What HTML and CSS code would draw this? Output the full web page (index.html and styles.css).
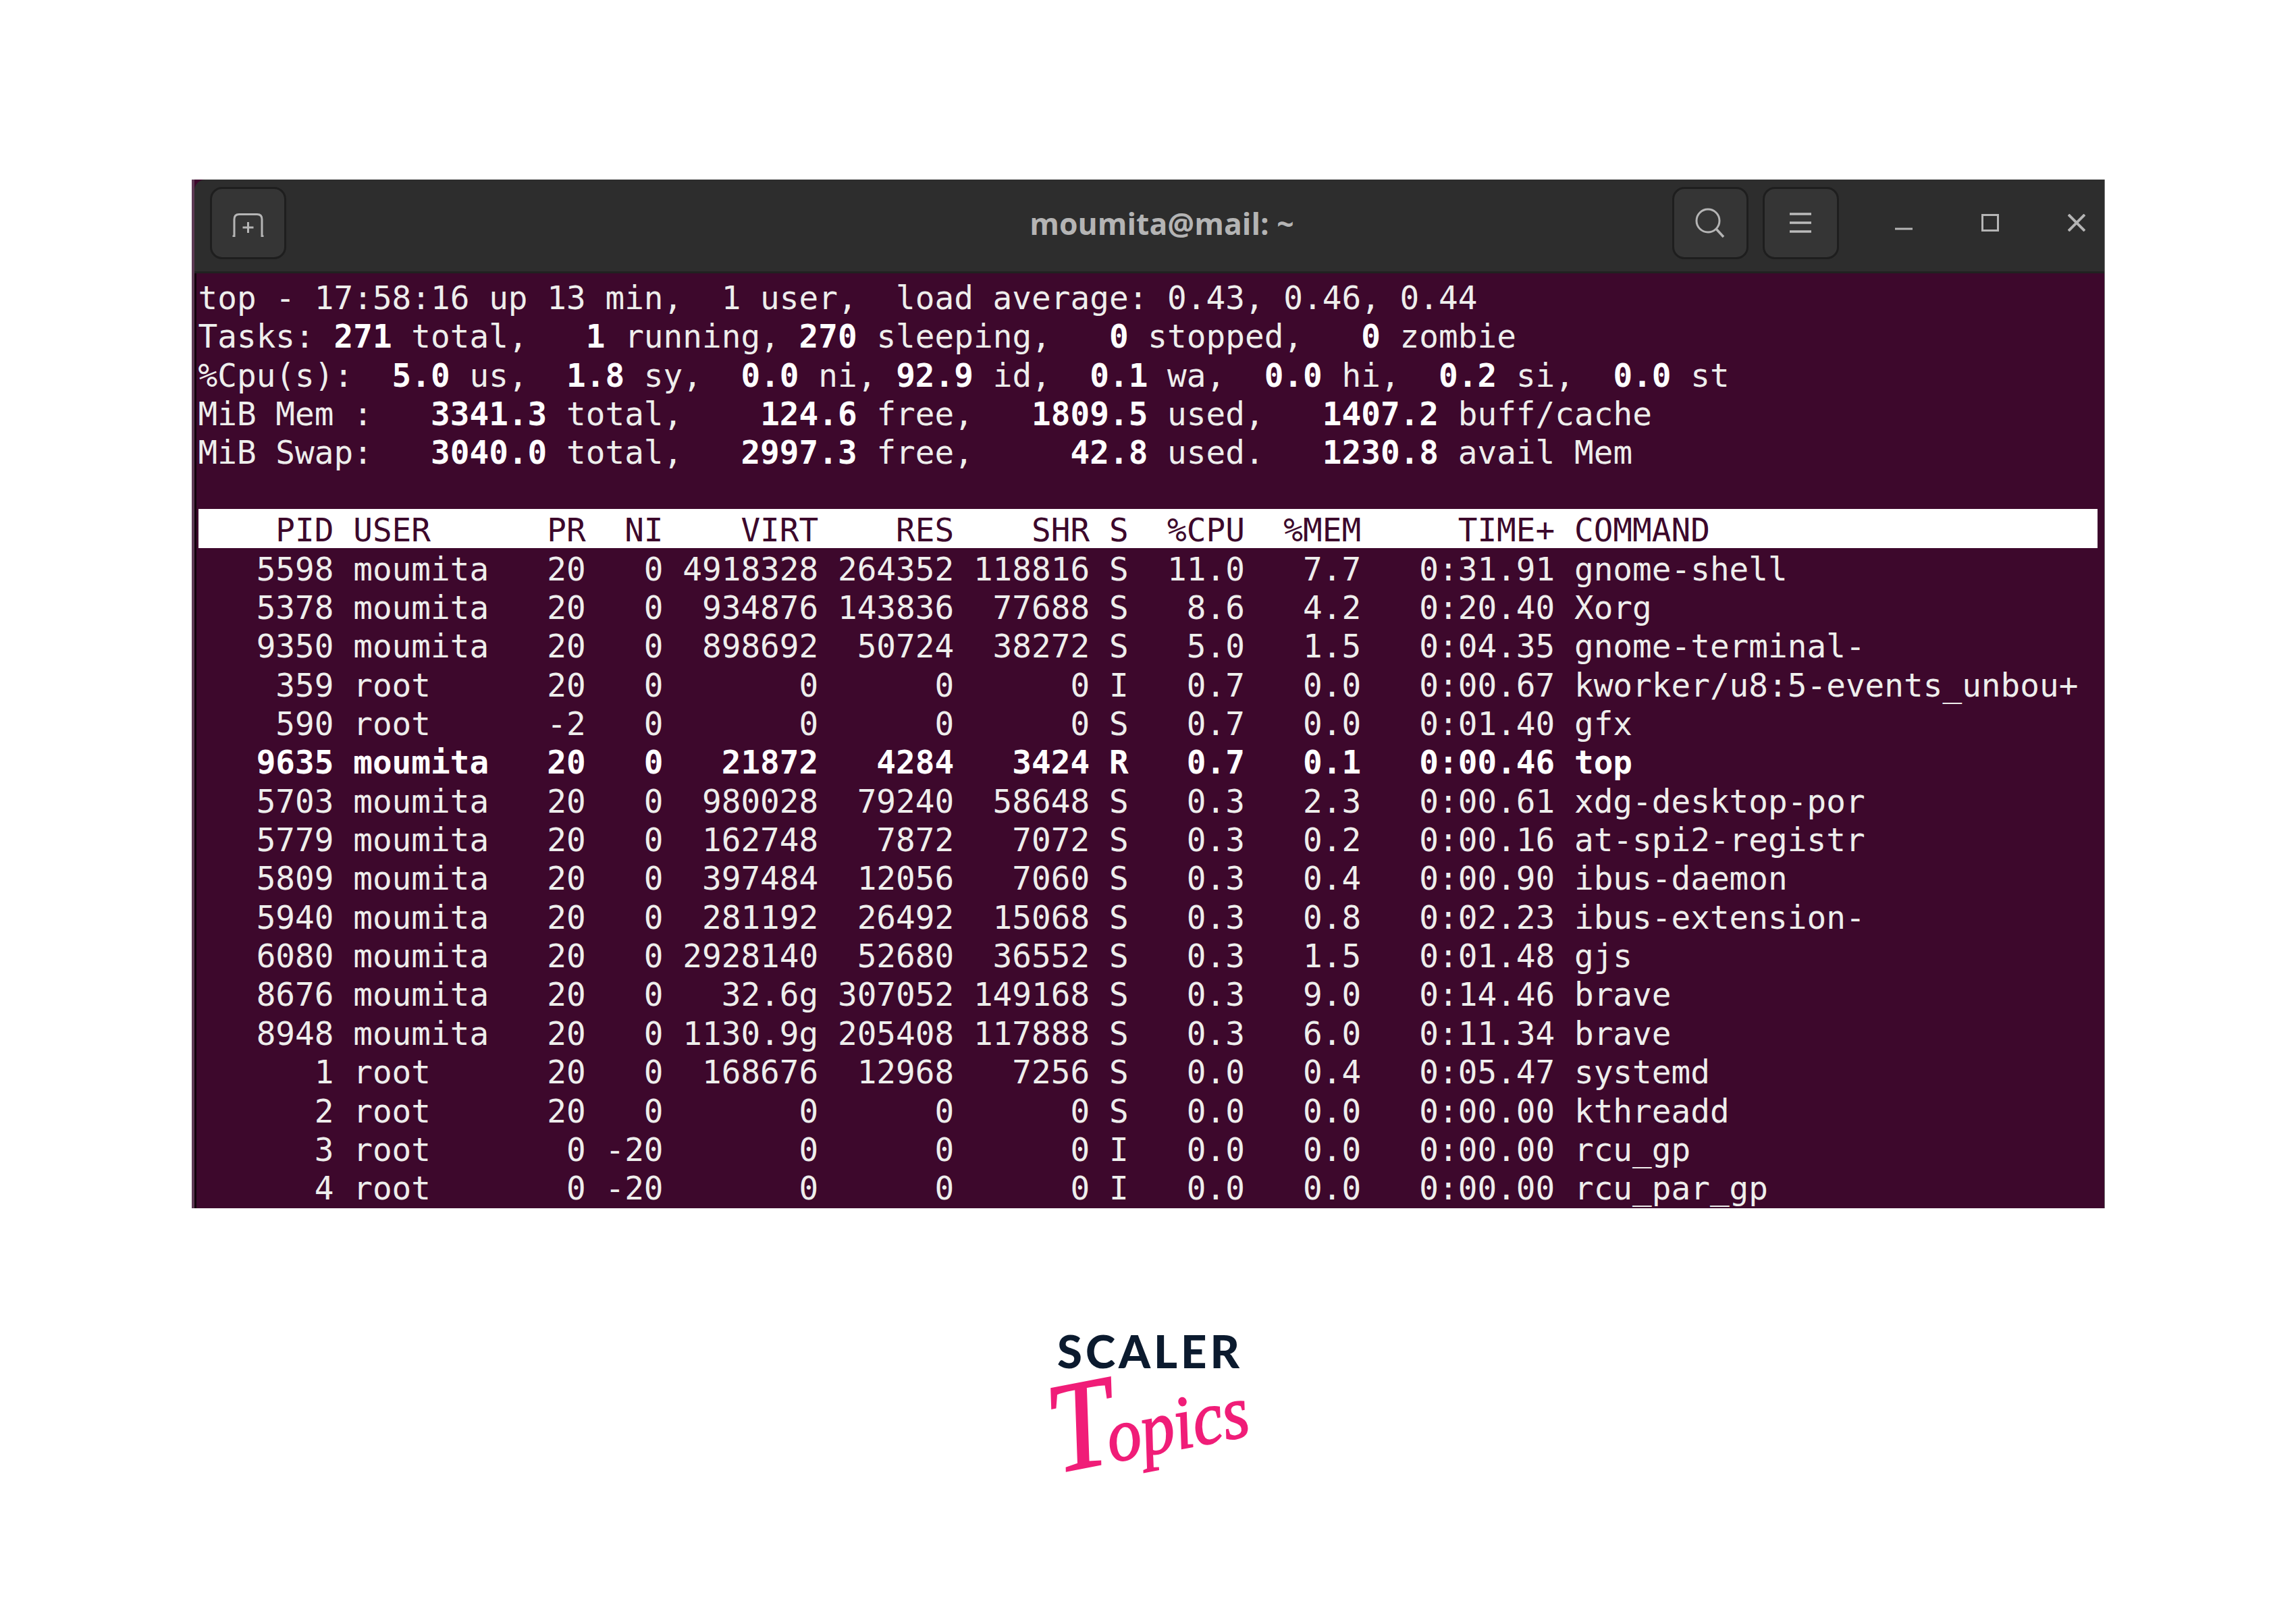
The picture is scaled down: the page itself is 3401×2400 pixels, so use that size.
FILE: index.html
```html
<!DOCTYPE html>
<html lang="en">
<head>
<meta charset="utf-8">
<title>top - Scaler Topics</title>
<link rel="stylesheet" href="styles.css">
</head>
<body>
<main class="page">
  <section class="window">
    <header class="titlebar">
      <div class="tb-left">
        <button class="tb-btn">
          <svg class="ico-tab" viewBox="0 0 47 35"><path d="M0.500 34H3V9Q3 1.500 10 1.500H37Q44 1.500 44 9V34H46.500M23.500 13V29M15.500 21H31.500" fill="none" stroke="#b5b5b5" stroke-width="3"/></svg>
        </button>
      </div>
      <div class="tb-title">moumita@mail: ~</div>
      <div class="tb-right">
        <button class="tb-btn">
          <svg class="ico-search" viewBox="0 0 44 45"><circle cx="19" cy="19" r="17" fill="none" stroke="#b5b5b5" stroke-width="3"/><path d="M31 31L42 43" stroke="#b5b5b5" stroke-width="3.500"/></svg>
        </button>
        <button class="tb-btn">
          <svg class="ico-menu" viewBox="0 0 32 30"><path d="M0 2H32M0 15H32M0 28H32" stroke="#bbb" stroke-width="3.500"/></svg>
        </button>
        <div class="wm-btns">
          <svg class="ico-wm" viewBox="0 0 26 26"><path d="M0 22H26" stroke="#b5b5b5" stroke-width="3"/></svg>
          <svg class="ico-wm" viewBox="0 0 26 26"><rect x="1.500" y="1.500" width="23" height="23" fill="none" stroke="#b5b5b5" stroke-width="3"/></svg>
          <svg class="ico-wm" viewBox="0 0 26 26"><path d="M1 1L25 25M25 1L1 25" stroke="#b5b5b5" stroke-width="4"/></svg>
        </div>
      </div>
    </header>
    <div class="term">
<pre class="ln">top - 17:58:16 up 13 min,  1 user,  load average: 0.43, 0.46, 0.44</pre>
<pre class="ln">Tasks: <b>271</b> total,   <b>1</b> running, <b>270</b> sleeping,   <b>0</b> stopped,   <b>0</b> zombie</pre>
<pre class="ln">%Cpu(s):  <b>5.0</b> us,  <b>1.8</b> sy,  <b>0.0</b> ni, <b>92.9</b> id,  <b>0.1</b> wa,  <b>0.0</b> hi,  <b>0.2</b> si,  <b>0.0</b> st</pre>
<pre class="ln">MiB Mem :   <b>3341.3</b> total,    <b>124.6</b> free,   <b>1809.5</b> used,   <b>1407.2</b> buff/cache</pre>
<pre class="ln">MiB Swap:   <b>3040.0</b> total,   <b>2997.3</b> free,     <b>42.8</b> used.   <b>1230.8</b> avail Mem</pre>
<pre class="ln"> </pre>
<pre class="ln head">    PID USER      PR  NI    VIRT    RES    SHR S  %CPU  %MEM     TIME+ COMMAND</pre>
<pre class="ln">   5598 moumita   20   0 4918328 264352 118816 S  11.0   7.7   0:31.91 gnome-shell</pre>
<pre class="ln">   5378 moumita   20   0  934876 143836  77688 S   8.6   4.2   0:20.40 Xorg</pre>
<pre class="ln">   9350 moumita   20   0  898692  50724  38272 S   5.0   1.5   0:04.35 gnome-terminal-</pre>
<pre class="ln">    359 root      20   0       0      0      0 I   0.7   0.0   0:00.67 kworker/u8:5-events_unbou+</pre>
<pre class="ln">    590 root      -2   0       0      0      0 S   0.7   0.0   0:01.40 gfx</pre>
<pre class="ln"><b>   9635 moumita   20   0   21872   4284   3424 R   0.7   0.1   0:00.46 top</b></pre>
<pre class="ln">   5703 moumita   20   0  980028  79240  58648 S   0.3   2.3   0:00.61 xdg-desktop-por</pre>
<pre class="ln">   5779 moumita   20   0  162748   7872   7072 S   0.3   0.2   0:00.16 at-spi2-registr</pre>
<pre class="ln">   5809 moumita   20   0  397484  12056   7060 S   0.3   0.4   0:00.90 ibus-daemon</pre>
<pre class="ln">   5940 moumita   20   0  281192  26492  15068 S   0.3   0.8   0:02.23 ibus-extension-</pre>
<pre class="ln">   6080 moumita   20   0 2928140  52680  36552 S   0.3   1.5   0:01.48 gjs</pre>
<pre class="ln">   8676 moumita   20   0   32.6g 307052 149168 S   0.3   9.0   0:14.46 brave</pre>
<pre class="ln">   8948 moumita   20   0 1130.9g 205408 117888 S   0.3   6.0   0:11.34 brave</pre>
<pre class="ln">      1 root      20   0  168676  12968   7256 S   0.0   0.4   0:05.47 systemd</pre>
<pre class="ln">      2 root      20   0       0      0      0 S   0.0   0.0   0:00.00 kthreadd</pre>
<pre class="ln">      3 root       0 -20       0      0      0 I   0.0   0.0   0:00.00 rcu_gp</pre>
<pre class="ln">      4 root       0 -20       0      0      0 I   0.0   0.0   0:00.00 rcu_par_gp</pre>
    </div>
  </section>
  <div class="logo">
    <div class="logo-scaler">SCALER</div>
    <div class="logo-topics"><span class="logo-t">T</span>opics</div>
  </div>
</main>
</body>
</html>
```
FILE: styles.css
```css
html, body { margin: 0; background: #fff; }
.page { display: flex; flex-direction: column; align-items: center; height: 2400px; overflow: hidden; padding-top: 266px; box-sizing: border-box; }
.window { width: 2834px; height: 1524px; display: flex; flex-direction: column; background: #3d082c; border-left: 4px solid #5e3a55; border-right: 1px solid #777; box-sizing: border-box; overflow: hidden; flex: none; }
.titlebar { height: 139px; flex: none; background: #2d2d2d; border-bottom: 3px solid #212121; border-top-left-radius: 16px; box-sizing: border-box; display: grid; grid-template-columns: 1fr auto 1fr; align-items: center; padding: 0 0 8px 2px; }
.tb-left { display: flex; padding-left: 21px; }
.tb-right { display: flex; justify-content: flex-end; gap: 21px; }
.tb-btn { width: 113px; height: 107px; padding: 0; background: #353535; border: 3px solid #1e1e1e; border-radius: 18px; box-sizing: border-box; display: flex; align-items: center; justify-content: center; }
.tb-title { font: 700 44.500px "Open Sans", sans-serif; color: #b4b4b4; padding-left: 36px; }
.ico-tab { width: 47px; height: 35px; display: block; margin-top: 6px; }
.ico-search { width: 44px; height: 45px; display: block; }
.ico-menu { width: 32px; height: 30px; display: block; }
.wm-btns { display: flex; gap: 102px; align-items: center; padding-left: 62px; padding-right: 28px; }
.ico-wm { width: 26px; height: 26px; display: block; }
.term { flex: 1; padding: 5px 0 0 3px; border-left: 3px solid #12000c; color: #eeeeec; font: 400 47.700px/57.360px "DejaVu Sans Mono", monospace; }
.ln { margin: 0; height: 57.360px; padding-top: 3px; box-sizing: border-box; font: inherit; white-space: pre; }
.head { width: 2813px; background: #fff; color: #3d082c; }
.ln b { font-weight: 700; color: #fff; }
.logo { flex: none; margin-top: 178px; display: flex; flex-direction: column; align-items: center; width: 300px; }
.logo-scaler { font: 900 67px/1 Lato, sans-serif; letter-spacing: 5px; color: #0b1a2e; padding-left: 6px; }
.logo-topics { font: italic 400 112px/1 "Liberation Serif", serif; color: #f01d78; -webkit-text-stroke: 2px #f01d78; transform: rotate(-11deg) scaleX(0.9); margin-top: -4px; white-space: nowrap; }
.logo-t { font-size: 190px; line-height: 120px; margin-right: -14px; }
```
